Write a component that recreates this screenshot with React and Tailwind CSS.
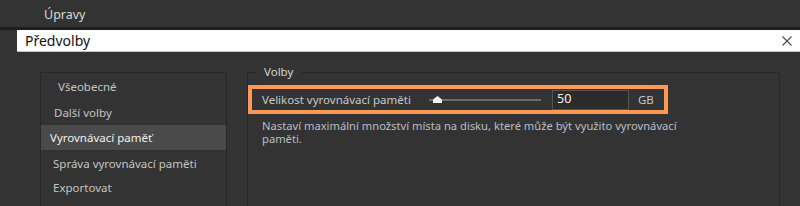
import React from 'react';

const menuItems = [
  { label: 'Všeobecné', pad: 'pl-[17px]', h: 'h-[26px]' },
  { label: 'Další volby', pad: 'pl-[13px]', h: 'h-[25px]' },
  { label: 'Vyrovnávací paměť', pad: 'pl-[9px]', h: 'h-[25px]', active: true },
  { label: 'Správa vyrovnávací paměti', pad: 'pl-[12px]', h: 'h-[27px]' },
  { label: 'Exportovat', pad: 'pl-[12px]', h: 'h-[22px]' },
];

function CloseIcon() {
  return (
    <svg width="10" height="10" viewBox="0 0 10 10" className="block">
      <path d="M0.5 0.5 L9.5 9.5 M9.5 0.5 L0.5 9.5" stroke="#4a4a4a" strokeWidth="1.1" fill="none" />
    </svg>
  );
}

function Slider() {
  return (
    <div className="relative w-[112px] h-[8px] flex items-center">
      <div className="w-full h-[2px] bg-[#6a6a6a]" />
      <svg width="9" height="7" viewBox="0 0 9 7" className="absolute left-[4px] top-[0px]">
        <polygon points="0,7 0,3.5 4.5,0 9,3.5 9,7" fill="#f4f4f4" />
      </svg>
    </div>
  );
}

export default function App() {
  return (
    <div
      className="w-[800px] h-[206px] overflow-hidden bg-[#333333] text-[11.5px]"
      style={{ fontFamily: '"Noto Sans", "Open Sans", sans-serif' }}
    >
      <div className="h-[27px] flex items-center pl-[44px] pt-[3px] text-[12.5px] text-[#d8d8d8]">Úpravy</div>
      <div className="h-[3px] bg-[#1e1e1e]" />
      <div className="ml-[17px] h-[22px] bg-white border-b border-[#c4c4c4] flex items-center justify-between pl-[8px] pr-[8px]">
        <span className="text-[14px] text-[#111] leading-none">Předvolby</span>
        <CloseIcon />
      </div>

      <div className="flex items-start pt-[13px] pl-[40px] gap-[20px]">
        <div className="mt-[7px] w-[187px] h-[140px] border border-b-0 border-[#282828] pt-[1px]">
          {menuItems.map((item) => (
            <div
              key={item.label}
              className={`${item.h} ${item.pad} flex items-center ${
                item.active ? 'bg-[#4a4a4a] text-[#f0f0f0]' : 'text-[#c4c4c4]'
              }`}
            >
              {item.label}
            </div>
          ))}
        </div>

        <fieldset className="w-[533px] h-[160px] border border-[#282828] border-b-0">
          <legend className="ml-[8px] px-[8px] leading-[14px] text-[#d4d4d4]">Volby</legend>
          <div className="mt-[6px] w-[420px] h-[29px] border-4 border-[#fc9a55] flex items-center pl-[10px]">
            <span className="w-[167px] text-[#c4c8cc]">Velikost vyrovnávací paměti</span>
            <Slider />
            <div className="ml-[11px] w-[77px] h-[20px] bg-[#2b2b2b] border border-[#555555] flex items-center pl-[4px] text-[12.5px] text-[#f2f2f2]">
              50
            </div>
            <span className="ml-[9px] text-[#c4c8cc]">GB</span>
          </div>
          <p className="mt-[5px] pl-[14px] text-[11.2px] leading-[13px] text-[#b8bec6]">
            Nastaví maximální množství místa na disku, které může být využito vyrovnávací
            <br />
            paměti.
          </p>
        </fieldset>
      </div>
    </div>
  );
}
